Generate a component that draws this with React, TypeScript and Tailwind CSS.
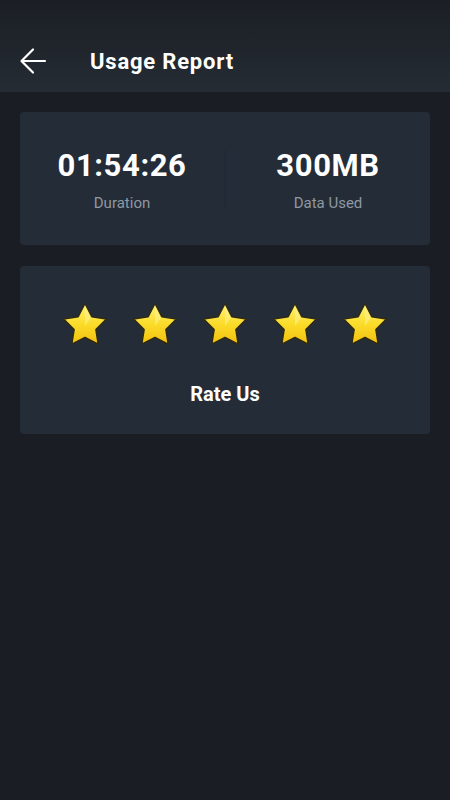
import React from "react";

function Star() {
  return (
    <svg width="48" height="48" viewBox="0 0 48 48">
      <defs>
        <linearGradient id="sg" x1="0" y1="0" x2="0" y2="1">
          <stop offset="0" stopColor="#fff27a" />
          <stop offset="0.5" stopColor="#fbdc2a" />
          <stop offset="1" stopColor="#f3c10e" />
        </linearGradient>
      </defs>
      <path
        d="M24 2.5 L30.8 15.7 L45.4 18 L34.9 28.6 L37.2 43.2 L24 36.5 L10.8 43.2 L13.1 28.6 L2.6 18 L17.2 15.7 Z"
        fill="url(#sg)"
        stroke="#2e2a14"
        strokeWidth="1.5"
        strokeLinejoin="round"
      />
      <path d="M24 6 L29.8 17 L24 25 Z" fill="#fff6a8" opacity="0.45" />
    </svg>
  );
}

export default function App() {
  const font = { fontFamily: "Roboto, 'Liberation Sans', sans-serif" };
  return (
    <div className="w-[450px] h-[800px] bg-[#1a1d24] flex flex-col" style={font}>
      <div className="h-[92px] bg-gradient-to-b from-[#1b1e25] to-[#252c33] flex items-end pb-[15px]">
        <div className="flex items-center h-[32px]">
          <svg className="ml-[19px]" width="28" height="28" viewBox="0 0 28 28" fill="none" stroke="#fff" strokeWidth="2.2" strokeLinecap="round" strokeLinejoin="round">
            <path d="M26 14 H3" />
            <path d="M14 2.5 L2.5 14 L14 25.5" />
          </svg>
          <span className="ml-[43px] text-white text-[22px] font-bold tracking-[0.8px]">Usage Report</span>
        </div>
      </div>
      <div className="px-[20px] pt-[20px] flex flex-col gap-[21px]">
        <div className="h-[133px] rounded-[4px] bg-[#242d37] flex items-center">
          <div className="flex-1 flex flex-col items-center pt-[2px]">
            <div className="text-white text-[31px] font-bold leading-[36px] tracking-[0.6px]">01:54:26</div>
            <div className="text-[#8f98a3] text-[15px] mt-[10px] leading-[18px]">Duration</div>
          </div>
          <div className="w-[2px] h-[57px] bg-[#1f2a37]" />
          <div className="flex-1 flex flex-col items-center pt-[2px]">
            <div className="text-white text-[31px] font-bold leading-[36px] tracking-[0.6px]">300MB</div>
            <div className="text-[#8f98a3] text-[15px] mt-[10px] leading-[18px]">Data Used</div>
          </div>
        </div>
        <div className="h-[168px] rounded-[4px] bg-[#242d37] flex flex-col items-center pt-[35px]">
          <div className="flex gap-[22px]">
            <Star />
            <Star />
            <Star />
            <Star />
            <Star />
          </div>
          <div className="mt-[34px] text-white text-[20px] font-bold leading-[22px]">Rate Us</div>
        </div>
      </div>
    </div>
  );
}
